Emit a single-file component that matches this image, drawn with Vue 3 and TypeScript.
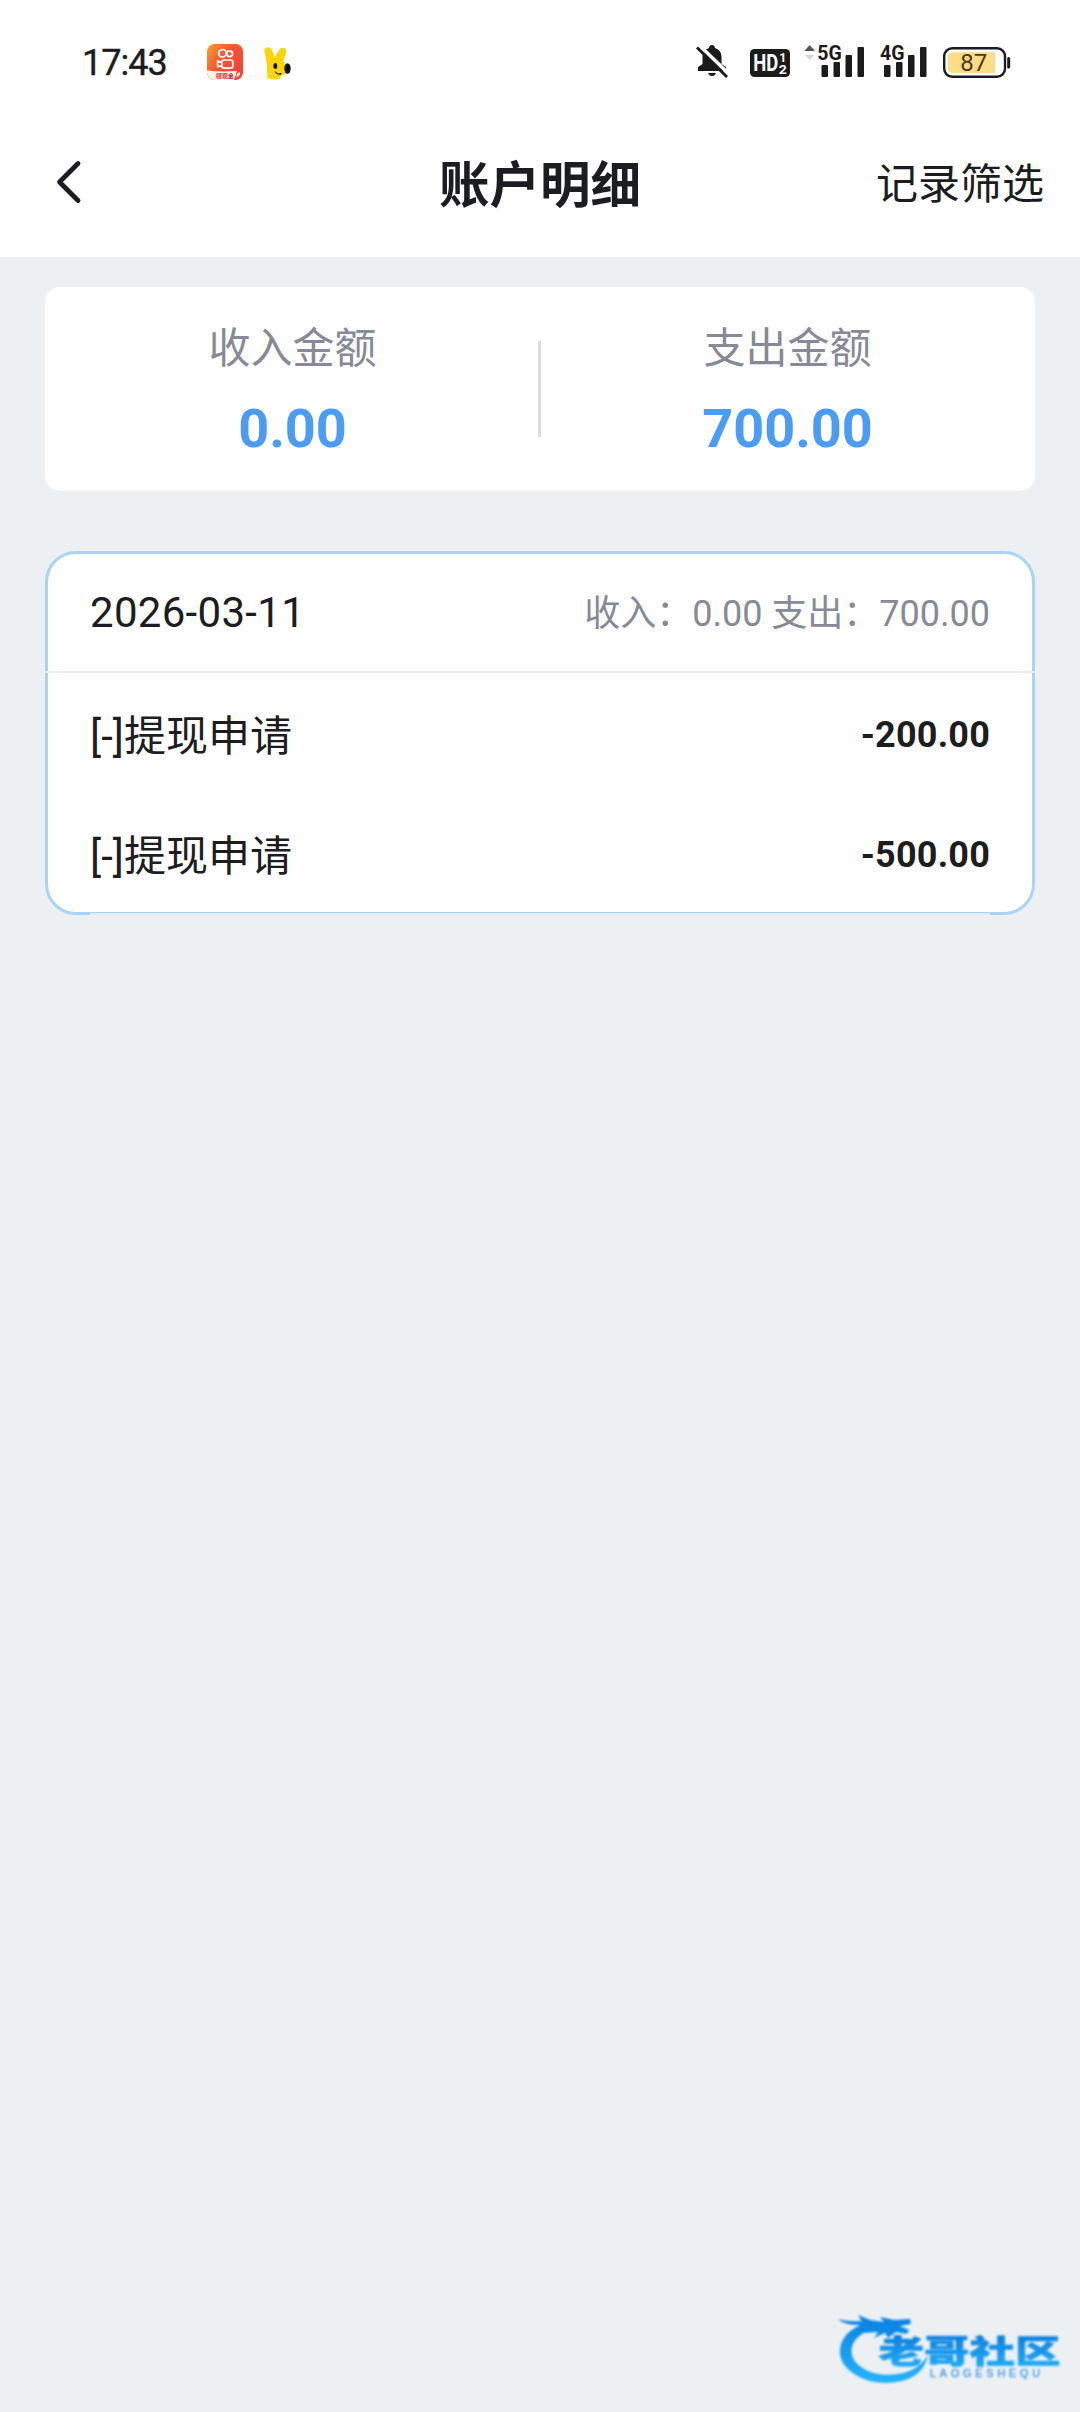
<script setup lang="ts">
interface RecordItem {
  title: string
  amount: string
}

const summary = [
  { label: '收入金额', value: '0.00' },
  { label: '支出金额', value: '700.00' },
]

const day = { date: '2026-03-11', income: '0.00', expense: '700.00' }

const records: RecordItem[] = [
  { title: '[-]提现申请', amount: '-200.00' },
  { title: '[-]提现申请', amount: '-500.00' },
]
</script>

<template>
  <div class="screen">
    <header class="top">
      <div class="status">
        <span class="time">17:43</span>
        <svg class="app-icon" width="36" height="36" viewBox="0 0 36 36">
          <defs>
            <linearGradient id="appBg" x1="0" y1="0" x2="1" y2="0.7">
              <stop offset="0" stop-color="#ff9a30" />
              <stop offset="0.5" stop-color="#fb5530" />
              <stop offset="1" stop-color="#f5403c" />
            </linearGradient>
            <clipPath id="appClip"><rect width="36" height="36" rx="7.5" /></clipPath>
          </defs>
          <g clip-path="url(#appClip)">
            <rect width="36" height="36" fill="url(#appBg)" />
            <path d="M0 26.500 Q14 28 30 27 L27 36 H0Z" fill="#fff3e2" />
          </g>
          <g fill="none" stroke="#fff" stroke-width="1.7">
            <circle cx="15.4" cy="9.3" r="3.8" />
            <circle cx="22.6" cy="9.8" r="2.9" />
            <rect x="14.8" y="16" width="11" height="8.2" rx="2.4" />
            <path d="M14.5 18.5 L10.6 17 V23 L14.5 21.6" stroke-linejoin="round" />
          </g>
          <text x="8.500" y="34" class="app-label" textLength="18.500" lengthAdjust="spacingAndGlyphs">领现金</text>
          <path d="M29.500 33.500 Q29 29 33 28 Q33.500 32 29.500 33.500Z" fill="#fff0d8" />
        </svg>
        <svg class="rabbit" width="27" height="33" viewBox="0 0 27 33">
          <path
            d="M3.500 31.500 Q2.800 23 3 17 L0.500 5 Q-.2 .8 3.300 .3 Q6.800 -.2 8.300 4 L10.800 10 L15 3 Q17 .2 20 1 Q23 2.200 21.600 6 L19.500 14 Q22.500 18 22.500 24 Q22 28 16.500 29 L16.200 32 Q10 33 3.500 31.500Z"
            fill="#fcd40a"
          />
          <ellipse cx="23.500" cy="21.500" rx="3.200" ry="5.200" fill="#15120b" />
          <ellipse cx="11.300" cy="19" rx="1.900" ry="2.900" fill="#15120b" />
          <path d="M11.500 25 Q14 28.200 17 26.600" fill="none" stroke="#15120b" stroke-width="1.200" stroke-linecap="round" />
        </svg>

        <svg class="bell" width="33" height="34" viewBox="0 0 33 34">
          <path
            d="M2 26 V22 L6.500 19 V11 Q7 5 13 3 Q13.500 0 16 0 Q18.500 0 19 3 Q25 5 25.500 11 V19 L30 22 V26Z"
            fill="#1b1b1b"
          />
          <path d="M12 28 H20 Q19 31 16 31 Q13 31 12 28Z" fill="#1b1b1b" />
          <path d="M3.500 .5 L33.500 29.500" stroke="#fff" stroke-width="3.600" />
          <path d="M1 2.500 L31 32" stroke="#1b1b1b" stroke-width="2.800" />
        </svg>
        <svg class="hd" width="40" height="28" viewBox="0 0 40 28">
          <rect width="40" height="28" rx="4.500" fill="#1b1b1b" />
          <text x="3.200" y="22" class="hd-text" textLength="25" lengthAdjust="spacingAndGlyphs">HD</text>
          <text x="29.300" y="12.800" class="hd-num">1</text>
          <text x="28.800" y="24.800" class="hd-num" textLength="8" lengthAdjust="spacingAndGlyphs">2</text>
        </svg>
        <svg class="sig5" width="62" height="34" viewBox="0 0 62 34">
          <path d="M.3 6 L5.700 0 L11 6Z" fill="#555" />
          <path d="M.8 9.800 L5.700 15 L10.600 9.800Z" fill="#d4d4d4" />
          <text x="13.200" y="15.200" class="net" textLength="24.500" lengthAdjust="spacingAndGlyphs">5G</text>
          <g fill="#1b1b1b">
            <rect x="17.500" y="20" width="6.500" height="12" rx="1" />
            <rect x="29.500" y="17" width="6.500" height="15" rx="1" />
            <rect x="41.500" y="10" width="6.500" height="22" rx="1" />
            <rect x="53.500" y="2" width="6.500" height="30" rx="1" />
          </g>
        </svg>
        <svg class="sig4" width="48" height="34" viewBox="0 0 48 34">
          <text x="0" y="15.200" class="net" textLength="24.500" lengthAdjust="spacingAndGlyphs">4G</text>
          <g fill="#1b1b1b">
            <rect x="4" y="20" width="6.500" height="12" rx="1" />
            <rect x="16" y="17" width="6.500" height="15" rx="1" />
            <rect x="28" y="10" width="6.500" height="22" rx="1" />
            <rect x="40" y="2" width="6.500" height="30" rx="1" />
          </g>
        </svg>
        <svg class="battery" width="68" height="32" viewBox="0 0 68 32">
          <rect x="1.200" y="1.200" width="60.800" height="28.600" rx="8" fill="#fff" stroke="#1b1b20" stroke-width="2.400" />
          <path d="M10 5.200 H52 V26 H10 Q5 26 5 21 V10 Q5 5.200 10 5.200Z" fill="#ffdc85" />
          <text x="17.200" y="24.300" class="bat-text" textLength="27" lengthAdjust="spacingAndGlyphs">87</text>
          <rect x="64.200" y="10" width="3" height="11.500" rx="1.500" fill="#1b1b20" />
        </svg>
      </div>

      <div class="nav">
        <button class="back" aria-label="返回">
          <svg width="26" height="44" viewBox="0 0 26 44">
            <path
              d="M22 3.500 L3.500 22 L22 40.500"
              fill="none"
              stroke="#1b1d21"
              stroke-width="4.800"
              stroke-linecap="round"
              stroke-linejoin="round"
            />
          </svg>
        </button>
        <h1 class="title">账户明细</h1>
        <span class="filter">记录筛选</span>
      </div>
    </header>

    <main class="body">
      <section class="summary">
        <div v-for="s in summary" :key="s.label" class="col">
          <span class="label">{{ s.label }}</span>
          <span class="value">{{ s.value }}</span>
        </div>
      </section>

      <section class="card">
        <div class="day">
          <span class="date">{{ day.date }}</span>
          <span class="totals">收入：{{ day.income }} 支出：{{ day.expense }}</span>
        </div>
        <div v-for="(r, i) in records" :key="i" class="row">
          <span class="name">{{ r.title }}</span>
          <span class="amount">{{ r.amount }}</span>
        </div>
      </section>
    </main>

    <svg class="brand" width="240" height="84" viewBox="0 0 240 84">
      <defs>
        <linearGradient id="word" x1="0" y1="0" x2="0" y2="1">
          <stop offset="0.2" stop-color="#0d7fdc" />
          <stop offset="1" stop-color="#25b2fa" />
        </linearGradient>
        <linearGradient id="ring" gradientUnits="userSpaceOnUse" x1="0" y1="8" x2="0" y2="76">
          <stop offset="0" stop-color="#0a80e0" />
          <stop offset="1" stop-color="#25b4fb" />
        </linearGradient>
        <filter id="soft" x="-5%" y="-5%" width="110%" height="110%">
          <feGaussianBlur stdDeviation="0.8" />
        </filter>
      </defs>
      <g filter="url(#soft)">
        <g fill="url(#ring)">
          <path
            d="M38 15 Q17 20 11 36 Q6 54 24 66 Q44 79 72 73 Q94 67 98 47 Q91 60 74 65 Q50 70 34 61 Q17 51 23 36 Q28 25 46 20Z"
          />
          <path
            d="M8 11 Q18 14 30 13 L32 14 L28 7 L40 12 L54 14 L50 9 L64 12 L80 11 L81 16 L70 18 L79 22 L77 26 L66 24 L58 30 L55 25 L44 30 L48 24 L34 25 L40 20 L26 20 L30 17 Q14 17 8 11Z"
          />
        </g>
        <text x="48.500" y="54.500" class="word" textLength="182" lengthAdjust="spacingAndGlyphs">老哥社区</text>
        <text x="100" y="69" class="latin" textLength="110">LAOGESHEQU</text>
      </g>
    </svg>
  </div>
</template>

<style>
body {
  background: #ecf0f3;
}
</style>

<style scoped>
.screen {
  display: flex;
  flex-direction: column;
  box-sizing: border-box;
  width: 1080px;
  height: 2412px;
  background: #ecf0f3;
  color: #1b1d21;
  font-family: Roboto, 'Noto Sans CJK SC', sans-serif;
}
.top {
  height: 257px;
  background: #fff;
}
.status {
  display: flex;
  align-items: flex-start;
  height: 110px;
  padding: 44px 0 0 82px;
  box-sizing: border-box;
}
.status svg {
  flex: none;
  overflow: visible;
}
.time {
  width: 125px;
  font-size: 36px;
  line-height: 38px;
  letter-spacing: -1px;
  white-space: nowrap;
  -webkit-text-stroke: 0.4px #1b1b1b;
}
.rabbit {
  margin: 3px 0 0 21px;
}
.bell {
  margin: 1px 0 0 405px;
}
.hd {
  margin: 5px 0 0 21px;
}
.sig5 {
  margin: 1px 0 0 14px;
}
.sig4 {
  margin: 1px 0 0 14px;
}
.battery {
  margin: 3px 0 0 15px;
}
.app-label {
  font: 700 6.2px 'Noto Sans CJK SC', sans-serif;
  fill: #d5283c;
}
.hd-text {
  font: 700 23px Roboto, sans-serif;
  fill: #fff;
}
.hd-num {
  font: 700 12.5px Roboto, sans-serif;
  fill: #fff;
}
.net {
  font: 700 21px Roboto, sans-serif;
  fill: #1b1b1b;
}
.bat-text {
  font: 400 24.5px Roboto, sans-serif;
  fill: #4b3b16;
}
.nav {
  display: grid;
  grid-template-columns: 1fr auto 1fr;
  align-items: center;
  height: 147px;
  padding: 0 36px 0 56px;
}
.back {
  display: flex;
  justify-self: start;
  padding: 0;
  margin-top: -3px;
  border: 0;
  background: none;
}
.title {
  margin: 5px 0 0;
  position: relative;
  left: -10px;
  font-size: 50.5px;
  line-height: 60px;
  font-weight: 700;
}
.filter {
  justify-self: end;
  margin-top: 3px;
  font-size: 42px;
  line-height: 50px;
}
.body {
  flex: 1;
  padding: 30px 45px 0;
}
.summary {
  position: relative;
  display: flex;
  height: 204px;
  border-radius: 15px;
  background: #fff;
}
.summary::after {
  content: '';
  position: absolute;
  left: 493px;
  top: 54px;
  width: 3px;
  height: 96px;
  background: #dcdddf;
}
.col {
  flex: 1;
  display: flex;
  flex-direction: column;
  align-items: center;
  padding-top: 32px;
}
.label {
  font-size: 42px;
  line-height: 60px;
  color: #858a96;
}
.value {
  margin-top: 19px;
  font-size: 54px;
  line-height: 62px;
  font-weight: 700;
  color: #4a9cf4;
}
.card {
  position: relative;
  box-sizing: border-box;
  height: 364px;
  margin-top: 60px;
  border: 3px solid #a9d4f4;
  border-radius: 31px;
  background: #fff;
}
.card::after {
  content: '';
  position: absolute;
  left: 42px;
  right: 42px;
  bottom: -3px;
  height: 2px;
  background: #e0ecf7;
}
.day,
.row {
  display: flex;
  align-items: center;
  justify-content: space-between;
  padding: 0 42px;
  height: 120px;
}
.day {
  box-sizing: border-box;
  height: 119px;
  margin: 0 -3px;
  padding: 0 45px;
  border-bottom: 2px solid #ebecee;
}
.date {
  font-size: 42px;
  letter-spacing: 0.3px;
}
.totals {
  margin-top: -6px;
  font-size: 36px;
  color: #858a96;
}
.name {
  margin-top: -2px;
  font-size: 42px;
}
.amount {
  margin-top: 4px;
  font-size: 36px;
  font-weight: 700;
  letter-spacing: 0.2px;
}
.brand {
  position: absolute;
  left: 830px;
  top: 2308px;
}
.word {
  font: 900 32px 'Noto Sans CJK SC', sans-serif;
  fill: url(#word);
  stroke: url(#word);
  stroke-width: 0.6px;
}
.latin {
  font: 400 10.7px 'Liberation Sans', sans-serif;
  fill: #3a98dc;
  stroke: #3a98dc;
  stroke-width: 0.3;
}
</style>
